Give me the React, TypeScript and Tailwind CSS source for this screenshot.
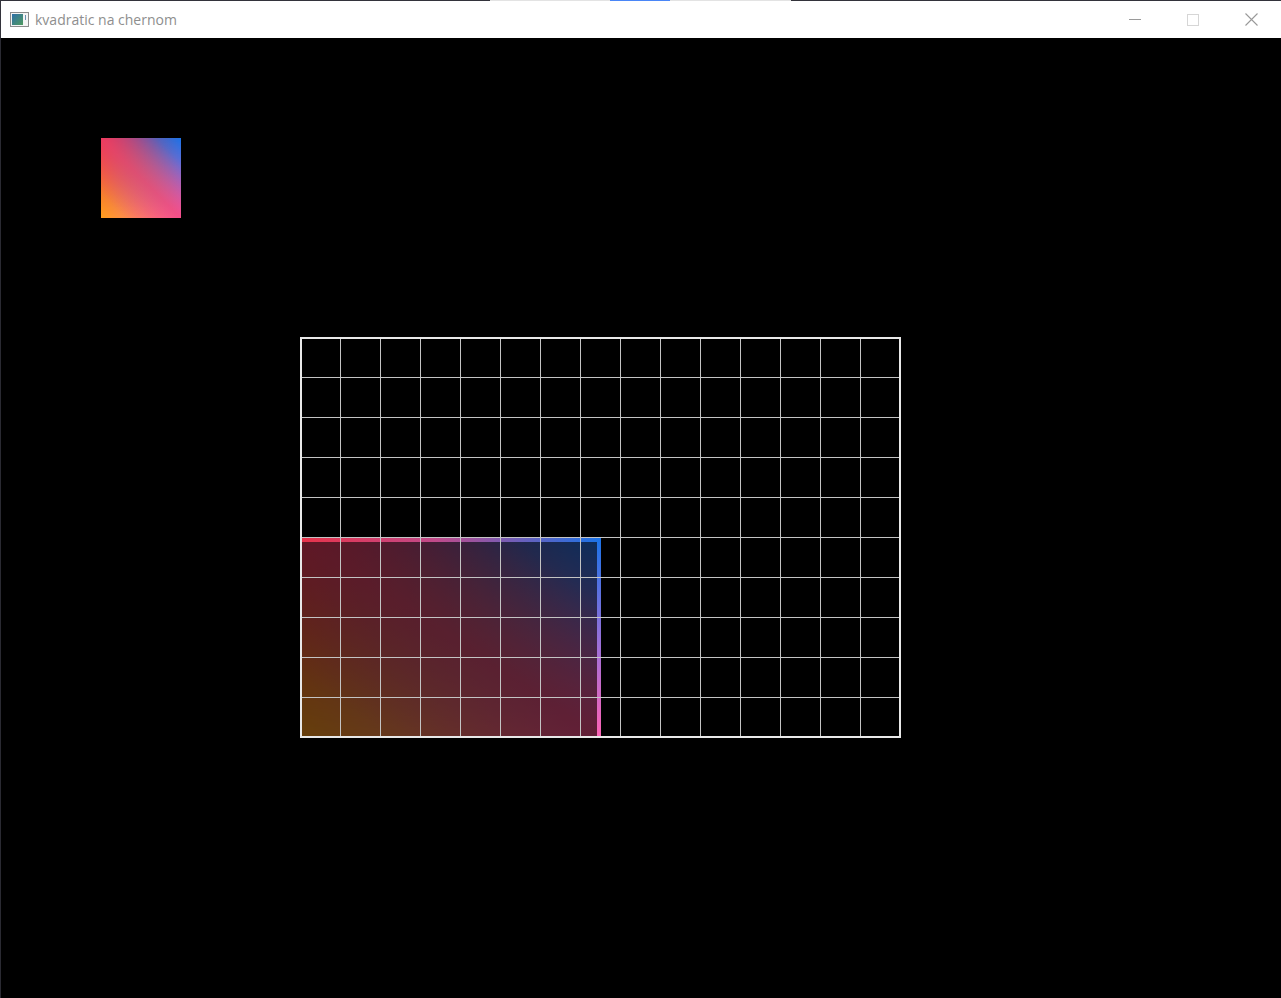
import React from "react";

function QuadGradient({ className = "" }: { className?: string }) {
  // four-corner blend: bottom row under, top row faded in from the top,
  // then a pink band along the diagonal so the centre doesn't go muddy
  return (
    <div className={className}>
      <div className="absolute inset-0 bg-[linear-gradient(to_right,#ff9f1c,#ff63b4)]" />
      <div className="absolute inset-0 bg-[linear-gradient(to_right,#e8334a,#1a73e8)] [mask-image:linear-gradient(to_bottom,black,transparent)]" />
      <div className="absolute inset-0 bg-[linear-gradient(to_top_right,rgba(240,64,110,0)_15%,rgba(240,64,110,0.6)_50%,rgba(240,64,110,0)_85%)]" />
    </div>
  );
}

function AppIcon() {
  return (
    <svg width="19" height="15" viewBox="0 0 19 15" shapeRendering="crispEdges">
      <defs>
        <linearGradient id="ico" x1="0" y1="0" x2="1" y2="1">
          <stop offset="0" stopColor="#2f6fa8" />
          <stop offset="1" stopColor="#4f9a5e" />
        </linearGradient>
      </defs>
      <rect x="0.5" y="0.5" width="18" height="14" fill="#f4f4f4" stroke="#8c8c8c" />
      <rect x="2" y="2" width="11" height="11" fill="url(#ico)" />
      <rect x="15" y="3" width="1" height="5" fill="#6a8fb0" />
    </svg>
  );
}

function TitleBar() {
  return (
    <div className="flex flex-col shrink-0">
      {/* window top edge with the taskbar-ish highlight */}
      <div className="flex h-px">
        <div className="w-[490px] bg-[#33333b]" />
        <div className="w-[120px] bg-[#e3e3e3]" />
        <div className="w-[60px] bg-[#4a86f7]" />
        <div className="w-[121px] bg-[#e3e3e3]" />
        <div className="flex-1 bg-[#33333b]" />
      </div>
      <div className="flex h-[37px] items-center bg-white border-l border-[#33333b]">
        <div className="pl-[9px] pr-[6px] flex items-center">
          <AppIcon />
        </div>
        <span className="text-[14px] leading-none text-[#8e8e8e] font-['Open_Sans','Liberation_Sans',sans-serif] pt-[1px]">
          kvadratic na chernom
        </span>
        <div className="ml-auto flex h-full pr-px">
          <button className="w-[58px] h-full flex items-center justify-center">
            <svg width="12" height="12" viewBox="0 0 12 12" shapeRendering="crispEdges">
              <rect x="0" y="5" width="12" height="1" fill="#9a9a9a" />
            </svg>
          </button>
          <button className="w-[58px] h-full flex items-center justify-center">
            <svg width="12" height="12" viewBox="0 0 12 12" shapeRendering="crispEdges">
              <rect x="0.5" y="0.5" width="11" height="11" fill="none" stroke="#d6d6d6" />
            </svg>
          </button>
          <button className="w-[58px] h-full flex items-center justify-center">
            <svg width="13" height="13" viewBox="0 0 13 13">
              <path d="M0.5 0.5 L12.5 12.5 M12.5 0.5 L0.5 12.5" stroke="#999999" strokeWidth="1.1" />
            </svg>
          </button>
        </div>
      </div>
    </div>
  );
}

function Grid() {
  const cols = Array.from({ length: 14 }, (_, i) => (i + 1) * 40);
  const rows = Array.from({ length: 9 }, (_, i) => (i + 1) * 40);
  return (
    <svg
      width="601"
      height="401"
      viewBox="0 0 601 401"
      shapeRendering="crispEdges"
      className="absolute left-[299px] top-[299px]"
    >
      {cols.map((x) => (
        <line key={`v${x}`} x1={x + 0.5} y1="0" x2={x + 0.5} y2="401" stroke="#c4c4c4" strokeWidth="1" />
      ))}
      {rows.map((y) => (
        <line key={`h${y}`} x1="0" y1={y + 0.5} x2="601" y2={y + 0.5} stroke="#c4c4c4" strokeWidth="1" />
      ))}
      <rect x="1" y="1" width="599" height="399" fill="none" stroke="#e8e8e8" strokeWidth="2" />
    </svg>
  );
}

function Highlight() {
  return (
    <div className="absolute left-[300px] top-[500px] w-[300px] h-[200px]">
      <QuadGradient className="absolute inset-0 opacity-[0.4]" />
      <div className="absolute left-0 top-0 right-0 h-[4px] bg-[linear-gradient(to_right,#e8334a,#c04a8a_45%,#1a73e8)]" />
      <div className="absolute right-0 top-0 bottom-0 w-[4px] bg-[linear-gradient(to_bottom,#1a73e8,#a070d8_55%,#ff63b4)]" />
    </div>
  );
}

export default function App() {
  return (
    <div className="w-[1281px] h-[998px] flex flex-col bg-black overflow-hidden">
      <TitleBar />
      {/* drawing surface */}
      <div className="relative flex-1 bg-black border-l border-[#2a2a32]">
        <QuadGradient className="absolute left-[100px] top-[100px] w-[80px] h-[80px]" />
        <Highlight />
        <Grid />
      </div>
    </div>
  );
}
